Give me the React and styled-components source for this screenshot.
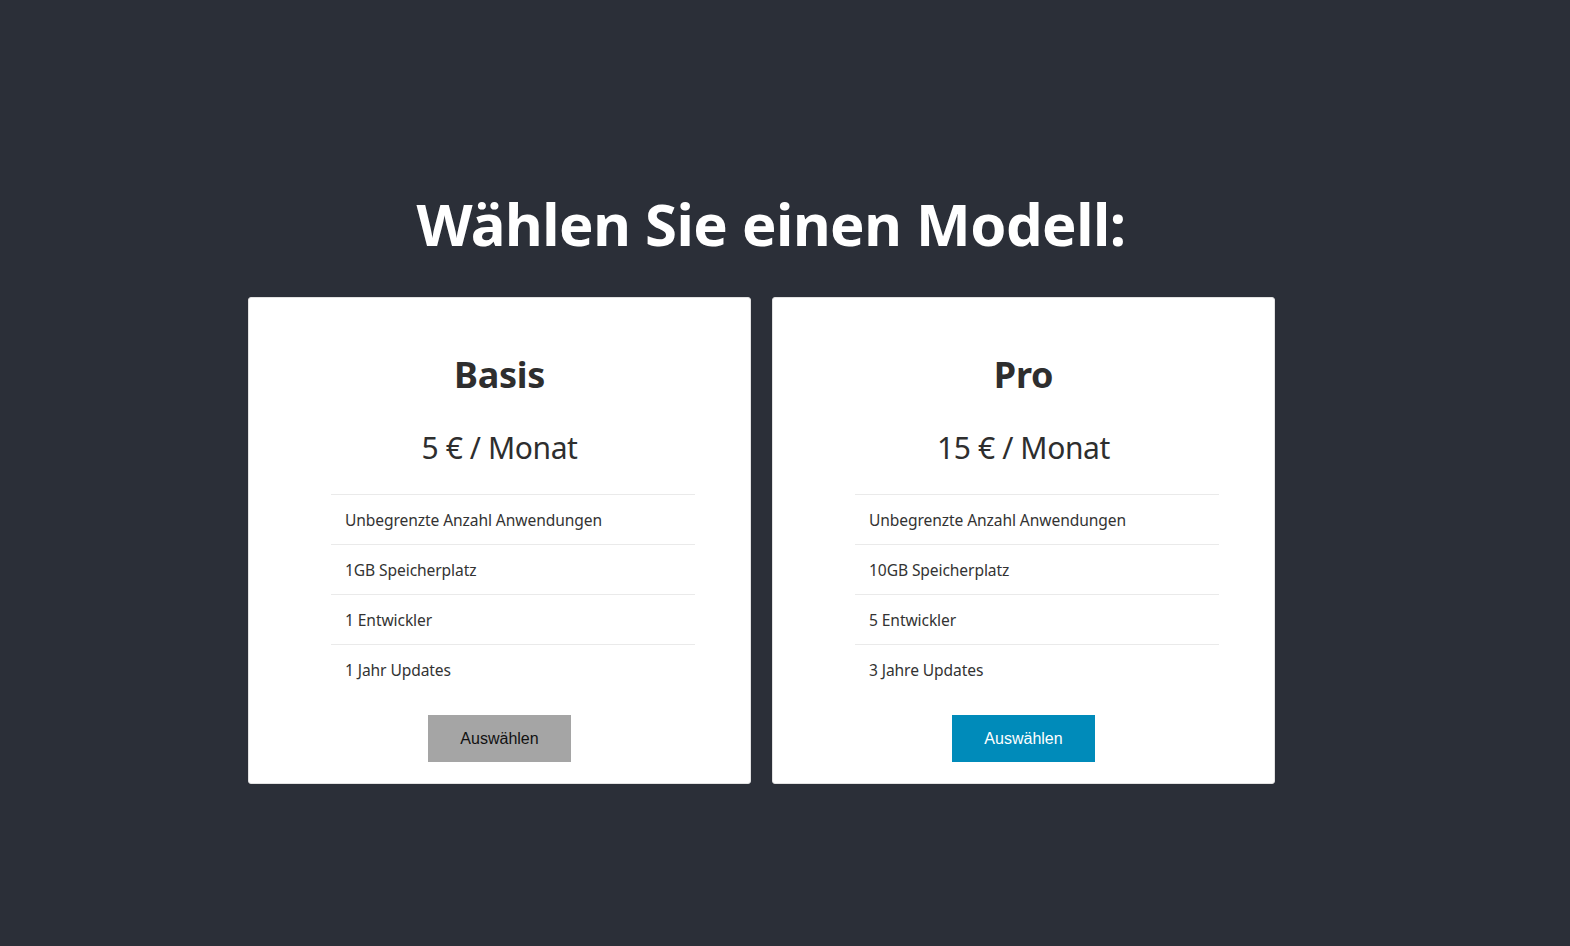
import React from "react";
import styled, { createGlobalStyle } from "styled-components";

const Global = createGlobalStyle`
  html, body { margin: 0; padding: 0; }
  body {
    background: #2b2f38;
    font-family: "Noto Sans", "Open Sans", sans-serif;
    min-height: 946px;
  }
`;

const Page = styled.main`
  padding-top: 186px;
  display: flex;
  flex-direction: column;
`;

const Title = styled.h1`
  margin: 0 0 35px 0;
  text-align: center;
  color: #ffffff;
  font-size: 58px;
  font-weight: 700;
  line-height: 76px;
  letter-spacing: -0.5px;
  transform: translateX(-14px);
`;

const Cards = styled.div`
  display: flex;
  gap: 21px;
  padding-left: 248px;
`;

const Card = styled.section`
  box-sizing: border-box;
  width: 503px;
  height: 487px;
  background: #fff;
  border: 1px solid #e2e2e2;
  border-radius: 3px;
  display: flex;
  flex-direction: column;
  align-items: center;
  padding-top: 50px;
`;

const PlanName = styled.h2`
  margin: 0;
  font-size: 36px;
  line-height: 54px;
  font-weight: 700;
  color: #2e2e2e;
  letter-spacing: -0.3px;
`;

const Price = styled.div`
  margin-top: 26px;
  font-size: 30px;
  line-height: 40px;
  color: #2e2e2e;
  letter-spacing: -0.4px;
`;

const Features = styled.ul`
  list-style: none;
  margin: 26px 0 0 82px;
  padding: 0;
  width: 364px;
  align-self: flex-start;
`;

const Feature = styled.li`
  box-sizing: border-box;
  height: 50px;
  border-top: 1px solid #eaeaea;
  padding-left: 14px;
  display: flex;
  align-items: center;
  font-size: 15.6px;
  color: #333;
  letter-spacing: -0.1px;
`;

const Button = styled.button`
  margin-top: 21px;
  width: 143px;
  height: 47px;
  border: none;
  border-radius: 0;
  font-family: "Liberation Sans", Arial, sans-serif;
  font-size: 16px;
  background: ${(p) => (p.$primary ? "#008bba" : "#a5a5a5")};
  color: ${(p) => (p.$primary ? "#ffffff" : "#111111")};
  cursor: pointer;
`;

const plans = [
  {
    name: "Basis",
    price: "5 € / Monat",
    features: ["Unbegrenzte Anzahl Anwendungen", "1GB Speicherplatz", "1 Entwickler", "1 Jahr Updates"],
    primary: false,
  },
  {
    name: "Pro",
    price: "15 € / Monat",
    features: ["Unbegrenzte Anzahl Anwendungen", "10GB Speicherplatz", "5 Entwickler", "3 Jahre Updates"],
    primary: true,
  },
];

export default function App() {
  return (
    <>
      <Global />
      <Page>
        <Title>Wählen Sie einen Modell:</Title>
        <Cards>
          {plans.map((p) => (
            <Card key={p.name}>
              <PlanName>{p.name}</PlanName>
              <Price>{p.price}</Price>
              <Features>
                {p.features.map((f) => (
                  <Feature key={f}>{f}</Feature>
                ))}
              </Features>
              <Button $primary={p.primary}>Auswählen</Button>
            </Card>
          ))}
        </Cards>
      </Page>
    </>
  );
}
